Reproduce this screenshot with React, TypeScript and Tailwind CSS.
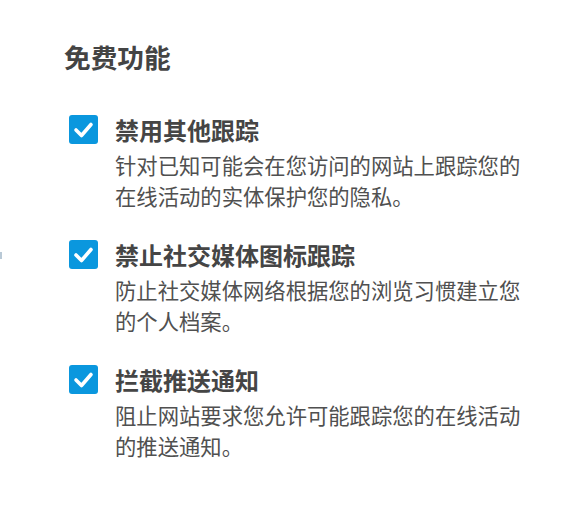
import * as React from "react"

type Feature = {
  title: string
  description: string
}

const features: Feature[] = [
  {
    title: "禁用其他跟踪",
    description: "针对已知可能会在您访问的网站上跟踪您的在线活动的实体保护您的隐私。",
  },
  {
    title: "禁止社交媒体图标跟踪",
    description: "防止社交媒体网络根据您的浏览习惯建立您的个人档案。",
  },
  {
    title: "拦截推送通知",
    description: "阻止网站要求您允许可能跟踪您的在线活动的推送通知。",
  },
]

function CheckBox() {
  return (
    <span className="mt-[4px] flex size-[29px] shrink-0 items-center justify-center rounded-[3px] bg-[#0a97de]">
      <svg viewBox="0 0 29 29" className="size-[29px]" fill="none">
        <polyline
          points="7,15 12.5,20.5 22,9.5"
          stroke="#ffffff"
          strokeWidth="3.6"
          strokeLinecap="round"
          strokeLinejoin="round"
        />
      </svg>
    </span>
  )
}

export default function App() {
  return (
    <div
      className="relative min-h-[508px] w-[584px] bg-white pl-[64px] pt-[39px] text-[#444]"
      style={{ fontFamily: '"Noto Sans CJK SC", "Noto Sans", sans-serif' }}
    >
      <span className="absolute left-0 top-[252px] h-[7px] w-[2px] bg-[#b9c9d6]" />
      <h2 className="text-[26.67px] font-bold leading-[36px] text-[#444]">免费功能</h2>

      <div className="mt-[36px] flex flex-col gap-[25px] pl-[5px]">
        {features.map((f) => (
          <label key={f.title} className="flex items-start gap-[17px]">
            <CheckBox />
            <div className="w-[415px]">
              <div className="text-[24px] font-bold leading-[38px] text-[#454545]">{f.title}</div>
              <p className="text-[21.33px] leading-[31px] text-[#505050]">{f.description}</p>
            </div>
          </label>
        ))}
      </div>
    </div>
  )
}
